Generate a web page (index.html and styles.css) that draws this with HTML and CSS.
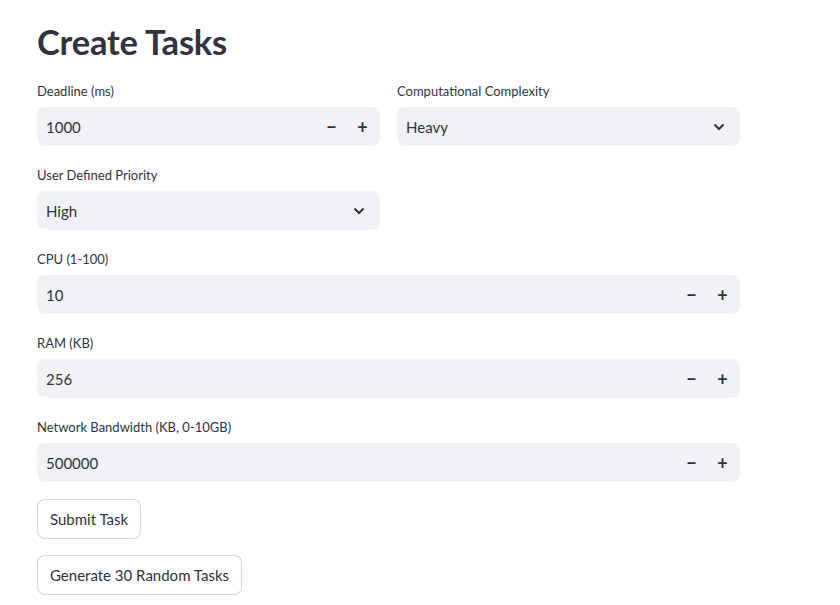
FILE: index.html
```html
<!DOCTYPE html>
<html>
<head>
<meta charset="utf-8">
<link rel="stylesheet" href="styles.css">
</head>
<body>
<main class="main">
  <h1 class="title">Create Tasks</h1>
  <div class="grid2">
    <div class="field">
      <label class="label">Deadline (ms)</label>
      <div class="box">
        <span class="value">1000</span>
        <span class="steps"><span class="step">&minus;</span><span class="step">+</span></span>
      </div>
    </div>
    <div class="field">
      <label class="label">Computational Complexity</label>
      <div class="box select">
        <span class="value">Heavy</span>
        <svg class="chev" width="12" height="8" viewBox="0 0 12 8"><path d="M1.5 1.5 L6 6 L10.5 1.5" fill="none" stroke="#31333f" stroke-width="2"/></svg>
      </div>
    </div>
  </div>
  <div class="grid2">
    <div class="field">
      <label class="label">User Defined Priority</label>
      <div class="box select">
        <span class="value">High</span>
        <svg class="chev" width="12" height="8" viewBox="0 0 12 8"><path d="M1.5 1.5 L6 6 L10.5 1.5" fill="none" stroke="#31333f" stroke-width="2"/></svg>
      </div>
    </div>
  </div>
  <div class="field">
    <label class="label">CPU (1-100)</label>
    <div class="box">
      <span class="value">10</span>
      <span class="steps"><span class="step">&minus;</span><span class="step">+</span></span>
    </div>
  </div>
  <div class="field">
    <label class="label">RAM (KB)</label>
    <div class="box">
      <span class="value">256</span>
      <span class="steps"><span class="step">&minus;</span><span class="step">+</span></span>
    </div>
  </div>
  <div class="field">
    <label class="label">Network Bandwidth (KB, 0-10GB)</label>
    <div class="box">
      <span class="value">500000</span>
      <span class="steps"><span class="step">&minus;</span><span class="step">+</span></span>
    </div>
  </div>
  <div class="buttons">
    <button class="btn">Submit Task</button>
    <button class="btn">Generate 30 Random Tasks</button>
  </div>
</main>
</body>
</html>
```
FILE: styles.css
```css
html, body {
  margin: 0;
  padding: 0;
  background: #ffffff;
}
body {
  font-family: "Lato", "Noto Sans", sans-serif;
  color: #31333f;
}
.main {
  width: 703px;
  padding: 21px 0 0 37px;
  display: flex;
  flex-direction: column;
}
.title {
  font-size: 34.5px;
  font-weight: 700;
  line-height: 42px;
  margin: 0 0 18px 0;
  letter-spacing: -0.2px;
}
.grid2 {
  display: grid;
  grid-template-columns: 343px 343px;
  column-gap: 17px;
}
.field {
  display: flex;
  flex-direction: column;
  margin-bottom: 19px;
}
.label {
  font-size: 13px;
  line-height: 20px;
  margin-bottom: 6px;
}
.box {
  height: 39px;
  background: #f0f2f6;
  border-radius: 8px;
  display: flex;
  align-items: center;
  justify-content: space-between;
  padding: 0 0 0 9px;
  font-size: 15px;
}
.select {
  padding-right: 15px;
}
.steps {
  display: flex;
  align-items: center;
  padding-right: 2px;
}
.step {
  width: 31px;
  text-align: center;
  font-size: 18px;
  font-weight: 700;
}
.chev {
  display: block;
}
.buttons {
  display: flex;
  flex-direction: column;
  align-items: flex-start;
  gap: 16px;
  margin-top: -2px;
}
.btn {
  height: 40px;
  padding: 0 12px;
  background: #ffffff;
  border: 1px solid rgba(49, 51, 63, 0.2);
  border-radius: 8px;
  font-family: "Lato", "Noto Sans", sans-serif;
  font-size: 15px;
  color: #31333f;
}
```
